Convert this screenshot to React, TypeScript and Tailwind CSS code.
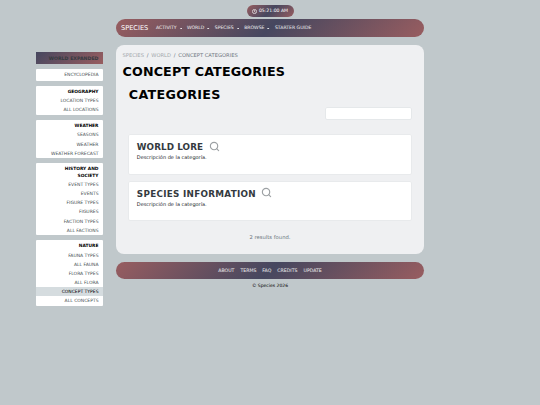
import { Search } from 'lucide-react';

interface MenuGroup {
  title?: string[];
  items: string[];
}

const navItems = ['ACTIVITY', 'WORLD', 'SPECIES', 'BROWSE'];

const sidebarGroups: MenuGroup[] = [
  { items: ['ENCYCLOPEDIA'] },
  { title: ['GEOGRAPHY'], items: ['LOCATION TYPES', 'ALL LOCATIONS'] },
  { title: ['WEATHER'], items: ['SEASONS', 'WEATHER', 'WEATHER FORECAST'] },
  {
    title: ['HISTORY AND', 'SOCIETY'],
    items: ['EVENT TYPES', 'EVENTS', 'FIGURE TYPES', 'FIGURES', 'FACTION TYPES', 'ALL FACTIONS'],
  },
  {
    title: ['NATURE'],
    items: ['FAUNA TYPES', 'ALL FAUNA', 'FLORA TYPES', 'ALL FLORA', 'CONCEPT TYPES', 'ALL CONCEPTS'],
  },
];

const categories = [
  { name: 'WORLD LORE', tracking: 'tracking-[0.08px]' },
  { name: 'SPECIES INFORMATION', tracking: 'tracking-[0.28px]' },
];

const footerLinks = ['ABOUT', 'TERMS', 'FAQ', 'CREDITS', 'UPDATE'];

const Clock = () => (
  <div className="flex h-[12px] w-[47px] items-center justify-center gap-[2px] rounded-full bg-[linear-gradient(135deg,#985d60,#46475f_50%,#985d60)] pt-px text-[4.6px] text-white">
    <svg viewBox="0 0 10 10" className="size-[5px]" fill="none" stroke="currentColor" strokeWidth="1.3">
      <circle cx="5" cy="5" r="4.2" />
      <path d="M5 2.3V5.3L6.8 6.3" />
    </svg>
    <span>05:21:00 AM</span>
  </div>
);

const Navbar = () => (
  <nav className="flex h-[18px] items-center rounded-full bg-[linear-gradient(135deg,#985d60,#46475f_50%,#985d60)] pl-[5px] pt-px text-[4.6px] text-white/90">
    <span className="w-[35px] text-[6.6px] text-white">SPECIES</span>
    <div className="flex items-center gap-[5px]">
      {navItems.map((item) => (
        <a key={item} className="flex items-center gap-[3px]">
          {item}
          <svg viewBox="0 0 6 4" className="h-[1.6px] w-[2.4px]" fill="currentColor">
            <path d="M0 0H6L3 4Z" />
          </svg>
        </a>
      ))}
      <a>STARTER GUIDE</a>
    </div>
  </nav>
);

const Sidebar = () => (
  <aside className="mt-[52px] flex w-[67px] flex-col gap-[4.9px] text-right text-[4.5px] text-[#484f54]">
    <div className="h-[12.2px] bg-[linear-gradient(135deg,#46475f,#985d60)] pr-[4.5px] text-[4.7px] font-bold leading-[13px] text-[#343a40]">
      WORLD EXPANDED
    </div>
    {sidebarGroups.map((group) => (
      <div
        key={group.items[0]}
        className={group.title ? 'rounded-[1px] bg-white pb-[0.6px]' : 'rounded-[1px] bg-white py-[1.4px]'}
      >
        {group.title && (
          <div className="pb-[1.2px] pr-[4.5px] pt-[3px] text-[4.4px] font-bold leading-[6.2px] text-black">
            {group.title.map((line) => (
              <div key={line}>{line}</div>
            ))}
          </div>
        )}
        {group.items.map((item) => (
          <a
            key={item}
            className={
              item === 'CONCEPT TYPES'
                ? 'block h-[9.15px] bg-[#d5dcdf] pr-[4.5px] leading-[9.15px] text-black'
                : 'block h-[9.15px] pr-[4.5px] leading-[9.15px]'
            }
          >
            {item}
          </a>
        ))}
      </div>
    ))}
  </aside>
);

const CategoryCard = ({ name, tracking }: { name: string; tracking: string }) => (
  <div className="h-[38.5px] rounded-[1px] bg-white px-[8px] pt-[6px] shadow-[0_0_0_0.5px_#e2e4e6]">
    <div className="flex items-center gap-[5.5px]">
      <h3 className={`text-[8.8px] font-bold leading-[12px] text-[#343a40] ${tracking}`}>{name}</h3>
      <Search size={11} strokeWidth={2.5} className="-mt-[1.5px] text-[#9da1a4]" />
    </div>
    <p className="text-[5px] leading-[8px] text-[#212529]">Descripción de la categoría.</p>
  </div>
);

export default function App() {
  return (
    <div className="h-[405px] w-[540px] overflow-hidden bg-[#c0c8cb] font-['DejaVu_Sans',sans-serif]">
      <div className="flex gap-[13px] pl-[36px]">
        <Sidebar />
        <div className="w-[308px]">
          <div className="flex justify-center pb-[2px] pt-[5px]">
            <Clock />
          </div>
          <Navbar />

          {/* Main panel */}
          <main className="mt-[8px] h-[209px] rounded-[8px] bg-[#eff0f2] px-[6.5px] pt-[6px]">
            <div className="flex gap-[2.8px] text-[5.2px] leading-[8px] text-[#6c757d]">
              <span className="text-[#a3a8ac]">SPECIES</span>/<span className="text-[#a3a8ac]">WORLD</span>/
              <span>CONCEPT CATEGORIES</span>
            </div>
            <h1 className="mt-[5px] text-[12.7px] font-bold leading-[16px] tracking-[0.14px] text-black">
              CONCEPT CATEGORIES
            </h1>
            <div className="px-[6.3px]">
              <h2 className="mt-[7px] text-[12.7px] font-bold leading-[16px] tracking-[0.3px] text-black">
                CATEGORIES
              </h2>
              <input className="ml-auto mt-[4.5px] block h-[11px] w-[85px] rounded-[1px] bg-white shadow-[0_0_0_0.5px_#dcdfe2]" />
              <div className="mt-[16.5px] flex flex-col gap-[8.2px]">
                {categories.map((category) => (
                  <CategoryCard key={category.name} {...category} />
                ))}
              </div>
            </div>
            <p className="mt-[12.6px] text-center text-[5.25px] leading-[8px] text-[#6c757d]">2 results found.</p>
          </main>

          <footer className="mt-[8px] flex h-[17px] items-center justify-center gap-[6px] rounded-full bg-[linear-gradient(135deg,#985d60,#46475f_50%,#985d60)] pt-px text-[4.65px] text-white/90">
            {footerLinks.map((link) => (
              <a key={link}>{link}</a>
            ))}
          </footer>
          <div className="mt-[2.5px] text-center text-[4.5px] leading-[8px] text-black">© Species 2026</div>
        </div>
      </div>
    </div>
  );
}
